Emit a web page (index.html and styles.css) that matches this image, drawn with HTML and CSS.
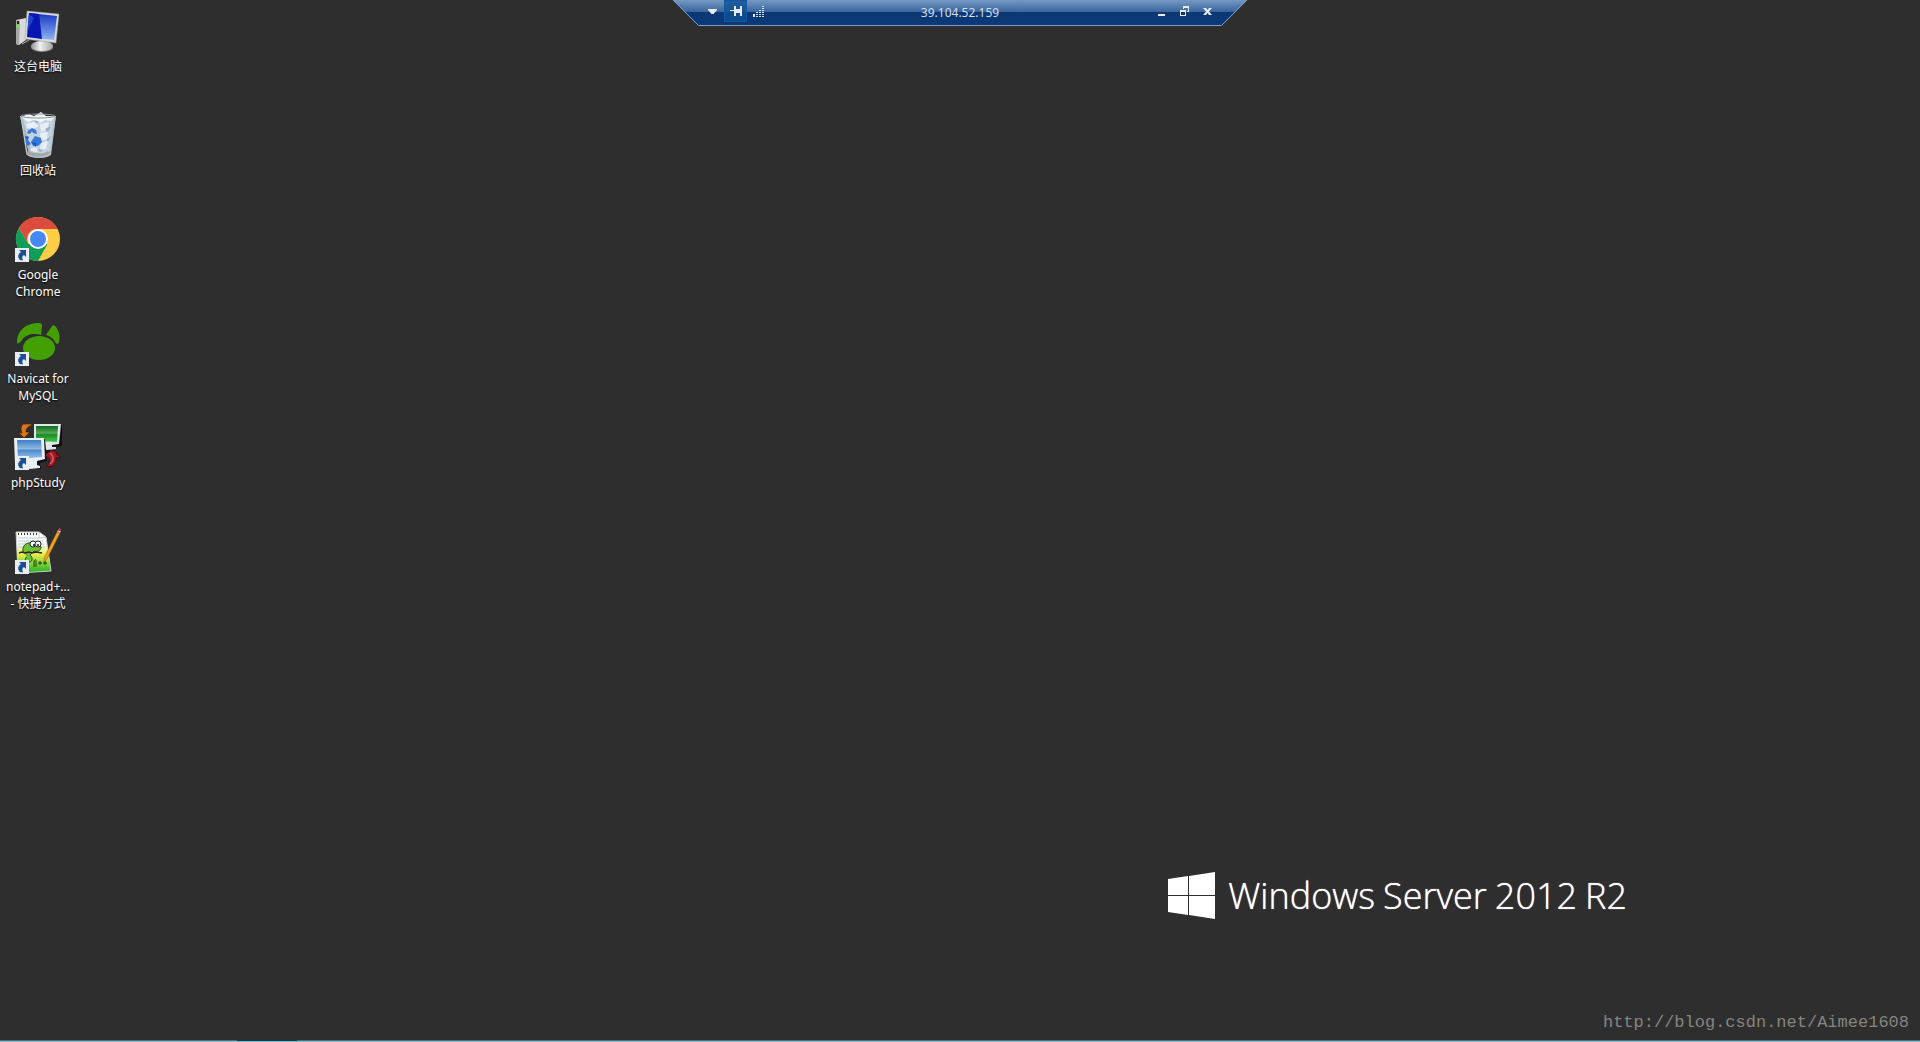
FILE: index.html
```html
<!DOCTYPE html>
<html lang="zh-CN">
<head>
    <meta charset="UTF-8">
    <meta name="viewport" content="width=device-width, initial-scale=1.0">
    <title>39.104.52.159 - 远程桌面连接</title>
    <link rel="stylesheet" href="styles.css">
</head>
<body>
    <!-- 快捷方式箭头 -->
    <svg class="defs" width="0" height="0" aria-hidden="true">
        <symbol id="shortcut" viewBox="0 0 14 14">
            <path fill="#e9eef3" d="M0 0h14v14H0z"/>
            <path fill="#1d4f95" d="M4 2h7v7L9 7C7 8 7 10 8 12.500L5 12C2 9 3 6 6 4z"/>
        </symbol>
    </svg>

    <!-- 远程连接栏 -->
    <header class="rdp-bar">
        <svg class="rdp-shape" viewBox="0 0 574 26" preserveAspectRatio="none" aria-hidden="true">
            <defs>
                <linearGradient id="bar" x1="0" y1="0" x2="0" y2="1">
                    <stop offset="0" stop-color="#7499c4"/>
                    <stop offset=".46" stop-color="#3a659c"/>
                    <stop offset=".46" stop-color="#0b3874"/>
                    <stop offset="1" stop-color="#0b3878"/>
                </linearGradient>
            </defs>
            <path fill="url(#bar)" d="M0 0h574l-25 26H25z"/>
            <path fill="none" stroke="#7f9fca" d="M0 0l25.500 25.500h523L574 0"/>
        </svg>
        <div class="rdp-tools">
            <button class="rdp-btn" aria-label="菜单">
                <svg width="9" height="5" viewBox="0 0 9 5"><path fill="#e8eaec" d="M0 0h9v1L5.500 5h-2L0 1z"/></svg>
            </button>
            <button class="rdp-btn pinned" aria-label="固定">
                <svg width="12" height="10" viewBox="0 0 12 10"><path fill="#e8eaec" d="M0 4h4V0h2v3h4V0h2v10h-2V7H6v3H4V5H0z"/></svg>
            </button>
            <button class="rdp-btn" aria-label="连接质量">
                <svg width="12" height="12" viewBox="0 0 12 12">
                    <path fill="#e8eaec" d="M0 9h2v3H0z"/>
                    <path fill="none" stroke="#d5dde8" stroke-width="2" stroke-dasharray="1 1" d="M4 12V7M7 12V4M10 12V0"/>
                </svg>
            </button>
        </div>
        <h1 class="rdp-title">39.104.52.159</h1>
        <div class="rdp-tools rdp-window">
            <button class="rdp-btn" aria-label="最小化">
                <svg width="10" height="10" viewBox="0 0 10 10"><path fill="#e8eaec" d="M1 8h7v2H1z"/></svg>
            </button>
            <button class="rdp-btn" aria-label="还原">
                <svg width="10" height="10" viewBox="0 0 10 10"><path fill="#e8eaec" fill-rule="evenodd" d="M3 0h6v6H7V5h1V2H4v1H3zM0 4h6v6H0zM1 6v3h4V6z"/></svg>
            </button>
            <button class="rdp-btn" aria-label="关闭">
                <svg width="10" height="10" viewBox="0 0 10 10"><path fill="#e8eaec" d="M0 2h3l1.500 2L6 2h3L6 5.500 9 9H6L4.500 7 3 9H0l3-3.500z"/></svg>
            </button>
        </div>
    </header>

    <main class="desktop">
        <!-- 桌面图标 -->
        <nav class="icons">
            <a href="#" class="icon">
                <svg viewBox="0 0 48 48">
                    <defs>
                        <linearGradient id="screen" x1="0" y1="1" x2="0" y2="0">
                            <stop offset="0" stop-color="#8eb4f4"/>
                            <stop offset="1" stop-color="#1735c4"/>
                        </linearGradient>
                        <linearGradient id="stand" x1="0" y1="0" x2="1" y2="0">
                            <stop offset="0" stop-color="#8f9292"/>
                            <stop offset=".4" stop-color="#f1f1f1"/>
                            <stop offset="1" stop-color="#a2a4a4"/>
                        </linearGradient>
                    </defs>
                    <path fill="#d8d9d9" d="M2 12l10-2v22L5 37l-3-1z"/>
                    <path fill="#a4a8a8" d="M2 12l4 1-1 24-3-1z"/>
                    <path fill="#222" d="M3 13h2v3H3z"/>
                    <path fill="#62ef28" d="M2 17h3v2H2z"/>
                    <path fill="none" stroke="#bbb" d="M8 36l7-4"/>
                    <path fill="#888b8b" d="M25 30h9v8h-9z"/>
                    <ellipse cx="28" cy="39" rx="11" ry="5" fill="#8f9292"/>
                    <ellipse cx="28" cy="38" rx="11" ry="5" fill="url(#stand)"/>
                    <path fill="#d8dadb" stroke="#999" stroke-width=".5" d="M13 3l32 3-3 29-31-4z"/>
                    <path fill="url(#screen)" d="M15 5l28 3-3 24-27-3z"/>
                    <path fill="#0716b0" d="M15 5l10 1 3 25-15-2z"/>
                    <path fill="#3463e5" opacity=".6" d="M15 6l5 4-7 14z"/>
                </svg>
                <span>这台电脑</span>
            </a>
            <a href="#" class="icon">
                <svg viewBox="0 0 48 48">
                    <path fill="#a9bac6" d="M6 4h36l-5 39c-5 4-18 4-22 0z"/>
                    <path fill="#c3d2de" d="M9 7h31l-4 32c-5 3-15 3-19 0z"/>
                    <path fill="#f0f5f8" d="M7 5l7-3 6 2 7-4 5 4 9 1-4 4-6-1-5 3-7-3-5 2z"/>
                    <path fill="#e6eff5" d="M12 12l8-2 5 4-6 3-6-1zM26 12l9-2-2 8-6 2zM26 21l8-1-1 7-6 2zM27 31l7-2-2 8-6 1zM16 37l6-2 2 5-7-1z"/>
                    <path fill="#94adc0" d="M31 17l6-3-3 6zM33 27l4-3-3 6zM13 17l6 2-4 1zM24 37l5 1-3 2zM20 8l6 2-4 1z"/>
                    <path fill="#3577dc" d="M14 19l4-3 4 2 1 4-4-1-1-2-2 3-3-1zM11 24l4 1-1 3 3 4-3 2-3-3zM17 30l4-6 6 2 1 4-4 4h-5z"/>
                    <path fill="#1956bb" d="M17 30l5 1v4zM11 24l4 1-2 2z"/>
                    <path fill="none" stroke="#b8c3c8" stroke-width="1.500" d="M7 4l6 38c4 4 18 4 23 0l5-38"/>
                    <ellipse cx="24" cy="4" rx="17" ry="2" fill="none" stroke="#8d969b"/>
                    <path fill="none" stroke="#a2a6a8" stroke-width="3" d="M13 40c5 4 18 4 22 0"/>
                </svg>
                <span>回收站</span>
            </a>
            <a href="#" class="icon">
                <svg viewBox="0 0 48 48">
                    <circle cx="24" cy="23" r="22" fill="#ffcd46"/>
                    <path fill="#109d59" d="M4.900 12A22 22 0 0 0 24 45l9.500-17L14.500 28z"/>
                    <path fill="#dd4b3e" d="M4.900 12A22 22 0 0 1 43.100 12V13H24a10 10 0 0 0-9.500 15z"/>
                    <circle cx="24" cy="23" r="10" fill="#fff"/>
                    <circle cx="24" cy="23" r="8" fill="#4688f4"/>
                    <use href="#shortcut" x="1" y="32" width="14" height="14"/>
                </svg>
                <span>Google Chrome</span>
            </a>
            <a href="#" class="icon">
                <svg viewBox="0 0 48 48">
                    <path fill="#43a000" d="M3 22C3 10 13 3 25 3q3 0 3 3l-1 9C20 13 12 14 8 20c-2 3-5 5-5 2zM32 15l6-9q2-2 4 1c4 6 4 11 3 15-1 3-3 2-4 0-2-4-5-6-9-7z"/>
                    <ellipse cx="25" cy="28" rx="16" ry="12" fill="#43a000"/>
                    <use href="#shortcut" x="1" y="32" width="14" height="14"/>
                </svg>
                <span>Navicat for MySQL</span>
            </a>
            <a href="#" class="icon">
                <svg viewBox="0 0 48 48">
                    <defs>
                        <linearGradient id="green" x1="0" y1="0" x2="0" y2="1">
                            <stop offset="0" stop-color="#08701a"/>
                            <stop offset=".45" stop-color="#5aa658"/>
                            <stop offset=".55" stop-color="#168a24"/>
                            <stop offset="1" stop-color="#45c948"/>
                        </linearGradient>
                        <linearGradient id="blue" x1="0" y1="0" x2="0" y2="1">
                            <stop offset="0" stop-color="#3e7dc6"/>
                            <stop offset=".45" stop-color="#8db6e0"/>
                            <stop offset=".55" stop-color="#4f89ca"/>
                            <stop offset="1" stop-color="#9bc4ec"/>
                        </linearGradient>
                    </defs>
                    <path fill="#111" d="M22 1h26v21l-12 3v4h-7z"/>
                    <path fill="#dfe7ed" d="M20 0h27l-2 20-7 1v2h4v2l-9 1-13-5z"/>
                    <path fill="url(#green)" d="M22 2h22l-1 16-21-1z"/>
                    <path fill="#111" d="M2 15h29l2 22-7 2 1 6H3z"/>
                    <path fill="#e8eff6" d="M0 14h30l1 21-8 2v4l3 1v2l-10 1-15-5z"/>
                    <path fill="url(#blue)" d="M3 16h24l1 17-24 2z"/>
                    <path fill="#d9761b" stroke="#2a1002" stroke-width=".6" d="M18 0H9C6 3 7 7 8 9l-4-1 6 6 6-6h-4c0-4 2-5 6-7z"/>
                    <path fill="#a91521" stroke="#310208" stroke-width=".6" d="M32 42c4-2 5-5 2-9h-3c3-8 11-8 12-2l4 2-5 1c0 7-4 10-10 8z"/>
                    <path fill="none" stroke="#ce6570" stroke-width="1.500" d="M36 29c4 3 4 8 0 11"/>
                    <use href="#shortcut" x="1" y="32" width="14" height="14"/>
                </svg>
                <span>phpStudy</span>
            </a>
            <a href="#" class="icon">
                <svg viewBox="0 0 48 48">
                    <defs>
                        <linearGradient id="note" x1="0" y1="0" x2="0" y2="1">
                            <stop offset=".3" stop-color="#fbfcf8"/>
                            <stop offset=".55" stop-color="#e4f04a"/>
                            <stop offset="1" stop-color="#19b320"/>
                        </linearGradient>
                    </defs>
                    <path fill="url(#note)" stroke="#ccc" d="M2 4h23l7 5 5 34-33 2z"/>
                    <path fill="none" stroke="#b4cfe6" d="M4 10h21M4 13h25M4 16h26M4 19h27"/>
                    <path fill="#fff" stroke="#999" stroke-width=".5" d="M25 4v6l7-1z"/>
                    <path fill="none" stroke="#333" stroke-width="2" stroke-dasharray="1 2" d="M4 6h20"/>
                    <path fill="#6cc236" stroke="#254f13" d="M9 24c-1-7 4-10 9-9l9 4c0 4-4 5-7 4l-4 4c3 2 3 7-1 7s-5-4-2-5"/>
                    <circle cx="19" cy="16" r="3" fill="#fff" stroke="#222"/>
                    <circle cx="24" cy="16" r="3" fill="#fff" stroke="#222"/>
                    <circle cx="20" cy="17" r="1" fill="#111"/>
                    <circle cx="24" cy="17" r="1" fill="#111"/>
                    <path fill="none" stroke="#3c1f28" stroke-width="1.500" d="M5 25l3-1 3 1 4-1 3 1 4-1 6 1"/>
                    <path fill="none" stroke="#173c12" d="M20 39v-6c1-2 2-2 2 0v6M24 35h4M26 33v4M29 35h4M31 33v4"/>
                    <path fill="#f0a41d" stroke="#8e5010" stroke-width=".5" d="M43 4l3 1-13 26-3 3v-4z"/>
                    <path fill="#b7b9ba" d="M43 4l1-2 3 1-1 2z"/>
                    <path fill="#c43b31" d="M44 2l1-2 2 1v2z"/>
                    <use href="#shortcut" x="1" y="32" width="14" height="14"/>
                </svg>
                <span>notepad+...<br>- 快捷方式</span>
            </a>
        </nav>

        <!-- 系统标识 -->
        <div class="brand">
            <svg width="47" height="47" viewBox="0 0 47 47" aria-hidden="true">
                <path fill="#fff" d="M0 7l20-3v19H0zM21 4l26-4v23H21zM0 24h20v19L0 40zM21 24h26v23l-26-4z"/>
            </svg>
            <p class="brand-name"><span>Windows</span><span>Server</span><span>2012</span><span>R2</span></p>
        </div>
    </main>

    <p class="watermark">http://blog.csdn.net/Aimee1608</p>
    <footer class="taskbar"><span class="task"></span></footer>
</body>
</html>
```
FILE: styles.css
```css
/* 基础样式 */
* {
    box-sizing: border-box;
}

body {
    margin: 0;
    min-height: 100vh;
    display: flex;
    flex-direction: column;
    position: relative;
    background: #2e2e2e;
    color: #fff;
    font-family: "Noto Sans", "Noto Sans CJK SC", sans-serif;
}

h1,
p {
    margin: 0;
    font-weight: 400;
}

.defs {
    position: absolute;
}

/* 远程连接栏 */
.rdp-bar {
    position: absolute;
    top: 0;
    left: 0;
    right: 0;
    width: 574px;
    height: 26px;
    margin: 0 auto;
    padding: 0 28px;
    display: grid;
    grid-template-columns: 1fr auto 1fr;
}

.rdp-shape {
    position: absolute;
    width: 100%;
    height: 100%;
}

.rdp-tools {
    position: relative;
    display: flex;
    height: 22px;
}

.rdp-window {
    justify-content: flex-end;
}

.rdp-btn {
    width: 23px;
    height: 22px;
    padding: 0;
    border: 0;
    background: none;
    display: flex;
    align-items: center;
    justify-content: center;
}

.rdp-btn.pinned {
    border: 1px solid #1159a3;
    background: rgba(14, 80, 148, 0.8);
}

.rdp-title {
    position: relative;
    color: #d5deeb;
    font-size: 12px;
    line-height: 25px;
}

/* 桌面 */
.desktop {
    flex: 1;
    display: flex;
    justify-content: space-between;
    align-items: flex-end;
}

.icons {
    align-self: flex-start;
    width: 76px;
    padding-top: 8px;
}

.icon {
    height: 104px;
    display: flex;
    flex-direction: column;
    align-items: center;
    color: #fff;
    font-size: 12px;
    line-height: 17px;
    text-align: center;
    text-decoration: none;
    text-shadow: 0 1px 2px #000;
}

.icon svg {
    width: 48px;
    height: 48px;
    margin-bottom: 2px;
}

.icon span {
    width: 72px;
}

/* 系统标识 */
.brand {
    display: flex;
    align-items: center;
    gap: 13px;
    margin-right: 293px;
    margin-bottom: 121px;
}

.brand-name {
    display: flex;
    gap: 8px;
    font-family: "Open Sans", "Noto Sans", sans-serif;
    font-size: 36px;
    font-weight: 300;
    line-height: 47px;
    text-shadow: 0 0 1px #fff;
}

/* 水印 */
.watermark {
    position: absolute;
    right: 11px;
    bottom: 9px;
    color: #858580;
    font-family: "Liberation Mono", monospace;
    font-size: 17px;
    line-height: 20px;
}

/* 任务栏边缘 */
.taskbar {
    height: 2px;
    padding-left: 237px;
    border-bottom: 1px solid #62bfe2;
    background: #65696b;
}

.task {
    display: block;
    width: 60px;
    height: 1px;
    background: #263438;
}
```
